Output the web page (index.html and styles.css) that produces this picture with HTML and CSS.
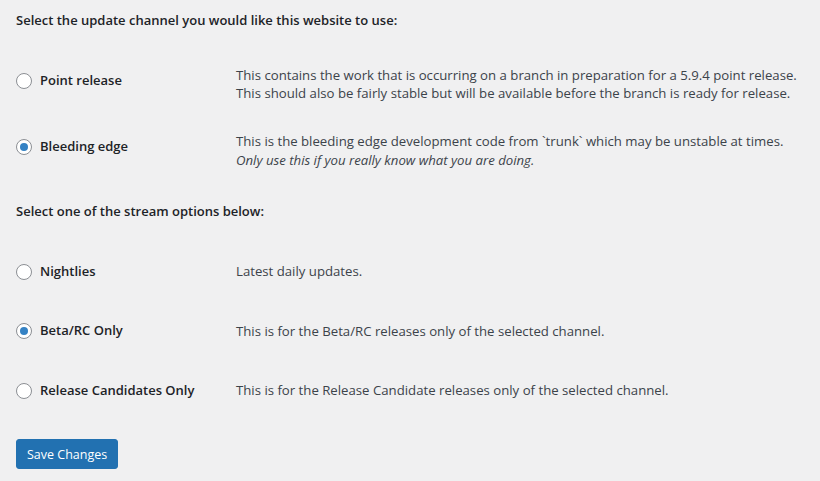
FILE: index.html
```html
<!DOCTYPE html>
<html lang="en">
<head>
    <meta charset="UTF-8">
    <meta name="viewport" content="width=device-width, initial-scale=1.0">
    <title>Beta Testing WordPress</title>
    <link rel="stylesheet" href="styles.css">
</head>
<body>
    <form class="wrap" id="betaForm">
        <p class="section-title">Select the update channel you would like this website to use:</p>
        <table class="form-table">
            <tr>
                <th><label><input type="radio" name="channel" value="point"> Point release</label></th>
                <td>This contains the work that is occurring on a branch in preparation for a 5.9.4 point release.<br>This should also be fairly stable but will be available before the branch is ready for release.</td>
            </tr>
            <tr>
                <th><label><input type="radio" name="channel" value="unstable" checked> Bleeding edge</label></th>
                <td>This is the bleeding edge development code from `trunk` which may be unstable at times.<br><em>Only use this if you really know what you are doing.</em></td>
            </tr>
        </table>

        <p class="section-title">Select one of the stream options below:</p>
        <table class="form-table">
            <tr>
                <th><label><input type="radio" name="stream" value="nightlies"> Nightlies</label></th>
                <td>Latest daily updates.</td>
            </tr>
            <tr>
                <th><label><input type="radio" name="stream" value="beta" checked> Beta/RC Only</label></th>
                <td>This is for the Beta/RC releases only of the selected channel.</td>
            </tr>
            <tr>
                <th><label><input type="radio" name="stream" value="rc"> Release Candidates Only</label></th>
                <td>This is for the Release Candidate releases only of the selected channel.</td>
            </tr>
        </table>

        <p class="submit"><button type="submit" class="button-primary">Save Changes</button></p>
    </form>
</body>
</html>
```

FILE: styles.css
```css
body {
    margin: 0;
    background-color: #f0f0f1;
    color: #3c434a;
    font-family: "Open Sans", sans-serif;
    font-size: 13px;
}
.wrap {
    padding: 0 4px 0 16px;
}
.section-title {
    margin: 0;
    padding: 11px 0 22px;
    font-size: 13px;
    line-height: 18px;
    font-weight: 600;
    color: #1d2327;
}
.form-table {
    border-collapse: collapse;
    width: 100%;
    margin-bottom: 7px;
}
.form-table th {
    width: 200px;
    padding: 20px 10px 20px 0;
    text-align: left;
    vertical-align: top;
    font-weight: 600;
    color: #1d2327;
    line-height: 19.5px;
}
.form-table td {
    padding: 15px 0 15px 10px;
    vertical-align: middle;
    font-size: 13.2px;
    line-height: 18.2px;
    white-space: nowrap;
}
.form-table label {
    display: flex;
    align-items: center;
    gap: 8px;
}
input[type="radio"] {
    appearance: none;
    margin: 0;
    width: 16px;
    height: 16px;
    border: 1px solid #8c8f94;
    border-radius: 50%;
    background-color: #fff;
    display: inline-flex;
    align-items: center;
    justify-content: center;
}
input[type="radio"]:checked::before {
    content: "";
    width: 8px;
    height: 8px;
    border-radius: 50%;
    background-color: #3582c4;
}
.submit {
    margin: 19px 0 0;
}
.button-primary {
    height: 30px;
    padding: 0 10px;
    font-family: inherit;
    font-size: 12.5px;
    color: #fff;
    background-color: #2271b1;
    border: 1px solid #2271b1;
    border-radius: 3px;
    cursor: pointer;
}
.button-primary:hover {
    background-color: #135e96;
}
```
